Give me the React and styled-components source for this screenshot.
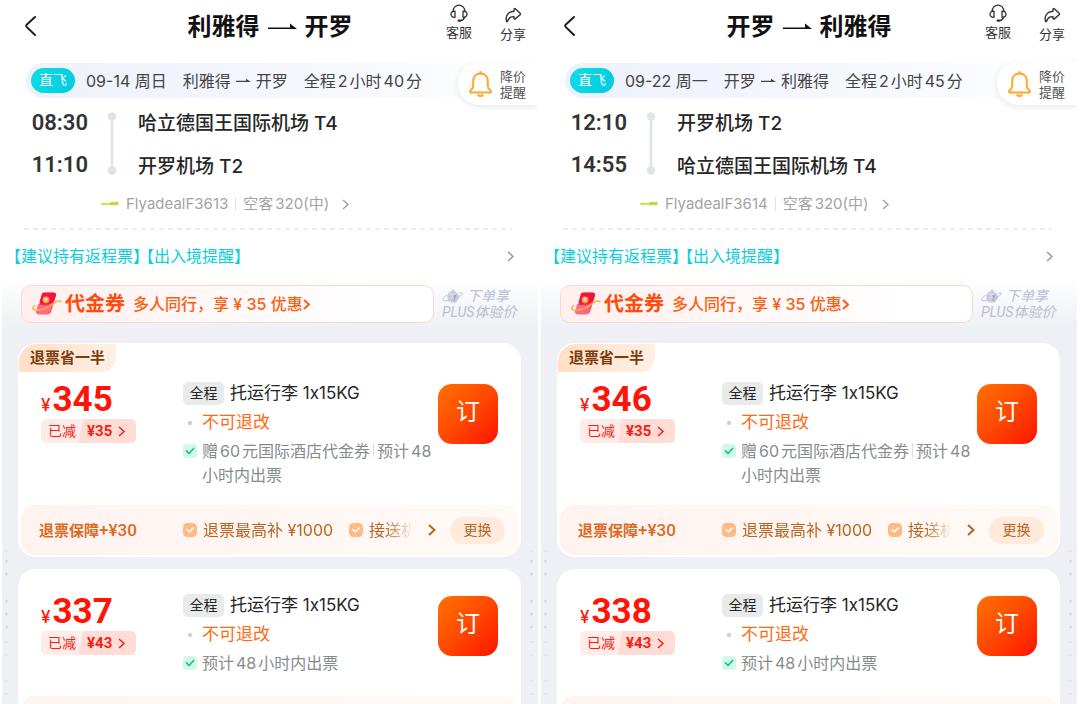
import React from "react";
import styled, { createGlobalStyle } from "styled-components";

const GlobalStyle = createGlobalStyle`
  * {
    box-sizing: border-box;
  }
  body {
    margin: 0;
    background: #ffffff;
    font-family: Inter, "Noto Sans CJK SC", sans-serif;
    color: #262626;
  }
  button {
    margin: 0;
    padding: 0;
    border: none;
    background: none;
    font-family: inherit;
    color: inherit;
    cursor: pointer;
  }
  a {
    color: inherit;
    text-decoration: none;
  }
  svg {
    display: block;
    flex: none;
  }
`;

const numberFont = `Roboto, "Noto Sans CJK SC", sans-serif`;

const Page = styled.div`
  height: 100vh;
  padding: 0 3px 0 2px;
  display: grid;
  grid-template-columns: 1fr 1fr;
  gap: 3px;
`;

const Screen = styled.main`
  position: relative;
  min-width: 0;
  height: 100vh;
  overflow-x: hidden;
  overflow-y: auto;
  scrollbar-width: none;
  background: #eff0f5;
`;

const Top = styled.section`
  background: #ffffff;
  padding-bottom: 10px;
`;

const Header = styled.header`
  height: 63px;
  display: grid;
  grid-template-columns: 1fr auto 1fr;
`;

const Back = styled.button`
  width: 48px;
  height: 52px;
  padding-left: 21px;
`;

const Title = styled.h1`
  margin: 0;
  display: flex;
  align-items: center;
  gap: 8px;
  height: 54px;
  font-size: 24px;
  line-height: 32px;
  font-weight: 700;
  color: #111111;
`;

const Actions = styled.div`
  display: flex;
  justify-content: flex-end;
  gap: 28px;
  padding: 4px 12px 0 0;
`;

const Action = styled.button`
  display: flex;
  flex-direction: column;
  align-items: center;
  gap: 2px;
  height: 40px;
  font-size: 13px;
  line-height: 16px;
  color: #333333;
`;

const TripBar = styled.div`
  position: relative;
  display: flex;
  align-items: center;
  height: 35px;
  margin-left: 24px;
  padding-left: 5px;
  border-radius: 18px 0 0 18px;
  background: linear-gradient(90deg, #edf1fb, #f6f8fd 60%, #ffffff);
  font-size: 16px;
  line-height: 24px;
  color: #444444;
  white-space: nowrap;
`;

const Direct = styled.span`
  width: 44px;
  height: 25px;
  margin-right: 11px;
  border-radius: 13px;
  background: linear-gradient(120deg, #10dce8, #00cbdc);
  font-size: 14px;
  line-height: 24px;
  text-align: center;
  color: #ffffff;
`;

const TripPart = styled.span`
  display: flex;
  align-items: center;
  gap: 5px;
  margin-right: 16px;
`;

// numbers inside chinese text get a narrow gap instead of a full space
const Num = styled.span`
  margin: 0 2px;
`;

const Reminder = styled.button`
  position: absolute;
  right: 0;
  top: -1px;
  display: flex;
  align-items: center;
  gap: 7px;
  height: 43px;
  padding: 0 12px 0 10px;
  border-radius: 22px 0 0 22px;
  background: #ffffff;
  box-shadow: 0 2px 6px rgba(60, 70, 100, 0.12);
  font-size: 13px;
  line-height: 16px;
  text-align: left;
  color: #555555;
`;

const Legs = styled.div`
  display: grid;
  grid-template-columns: 86px 48px 1fr;
  padding-top: 14px;
`;

const LegColumn = styled.div`
  display: flex;
  flex-direction: column;
  gap: 20px;
`;

const Time = styled.time`
  height: 22px;
  font-family: ${numberFont};
  font-size: 22px;
  line-height: 22px;
  font-weight: 600;
  text-align: right;
  color: #333333;
`;

const Airport = styled.span`
  height: 23px;
  padding-left: 2px;
  font-size: 19px;
  line-height: 23px;
  font-weight: 500;
  color: #262626;
  white-space: nowrap;
`;

const Rail = styled.svg`
  margin-left: 19px;
`;

const Flight = styled.a`
  display: flex;
  align-items: center;
  gap: 7px;
  margin: 15px 0 0 99px;
  font-size: 15px;
  line-height: 22px;
  color: #a3a3a3;
`;

const Aircraft = styled.span`
  margin-right: 4px;
`;

const Divider = styled.i`
  width: 1px;
  height: 14px;
  background: #e2e2e2;
`;

const Dashes = styled.div`
  height: 2px;
  margin: 13px 26px 0 22px;
  background: repeating-linear-gradient(90deg, #ebebeb 0 5px, transparent 5px 9px);
`;

const Notice = styled.a`
  display: flex;
  align-items: center;
  justify-content: space-between;
  padding: 14px 24px 0 11px;
  font-size: 16px;
  line-height: 24px;
  color: #08cfdd;
`;

const NoticeText = styled.span`
  display: flex;
  gap: 5px;
  font-feature-settings: "halt";
`;

const Promo = styled.section`
  display: flex;
  align-items: center;
  gap: 8px;
  padding: 7px 0 7px 19px;
  background: linear-gradient(180deg, #ffffff, #ecf0f4);
`;

const Coupon = styled.button`
  flex: 1;
  display: flex;
  align-items: center;
  height: 38px;
  padding: 0 9px;
  border: 1px solid #ffd6cb;
  border-radius: 10px;
  background: linear-gradient(90deg, #fff0ef, #ffffff 85%);
  font-size: 16px;
  line-height: 24px;
  font-weight: 500;
  color: #f9600f;
  white-space: nowrap;
`;

const CouponName = styled.strong`
  margin: 0 8px 0 3px;
  font-size: 20px;
  line-height: 28px;
  font-weight: 700;
  color: #ff4b0c;
`;

const Plus = styled.a`
  width: 96px;
  font-family: ${numberFont};
  font-size: 14px;
  line-height: 16px;
  font-style: italic;
  color: #b9bdd3;
  white-space: nowrap;
`;

const PlusLine = styled.span`
  display: flex;
  align-items: center;
  gap: 3px;
`;

const List = styled.section`
  display: flex;
  flex-direction: column;
  gap: 12px;
  padding: 13px 17px 20px 16px;
`;

const Card = styled.article`
  padding: 1px 2px 2px 1px;
  border-radius: 18px;
  background: #ffffff;
`;

const Tag = styled.div`
  width: 97px;
  height: 28px;
  border-radius: 18px 0 14px 0;
  background: linear-gradient(90deg, #ffdfc7, #fff0e5);
  font-size: 15px;
  line-height: 28px;
  font-weight: 700;
  text-align: center;
  color: #7d3c0d;
`;

const Fare = styled.div`
  display: grid;
  grid-template-columns: 142px 1fr 60px;
  padding: ${props => (props.$tagged ? "9px 21px 18px 22px" : "23px 21px 21px 22px")};
`;

const Price = styled.div`
  display: flex;
  align-items: baseline;
  gap: 2px;
  height: 38px;
  font-family: ${numberFont};
  font-size: 35px;
  line-height: 38px;
  font-weight: 700;
  color: #ff1408;
`;

const Yen = styled.span`
  font-family: Inter, sans-serif;
  font-size: 17px;
  line-height: 24px;
  font-weight: 500;
`;

const Saving = styled.button`
  display: flex;
  align-items: center;
  height: 24px;
  padding-right: 10px;
  border-radius: 5px;
  background: linear-gradient(100deg, #ffebe8 42%, #ffdcd6 43%);
  font-size: 14px;
  line-height: 24px;
  color: #fb1d10;
`;

const SavingLabel = styled.span`
  padding: 0 11px 0 7px;
`;

const SavingValue = styled.span`
  margin-right: 6px;
  font-family: ${numberFont};
  font-size: 15px;
  font-weight: 700;
`;

const Details = styled.div`
  display: flex;
  flex-direction: column;
  gap: 5px;
`;

const Detail = styled.div`
  display: grid;
  grid-template-columns: 14px 1fr;
  gap: 5px;
  font-size: ${props => (props.$warn ? "17px" : "16px")};
  line-height: 24px;
  color: ${props => (props.$warn ? "#ff6a10" : "#868c8e")};
  svg {
    margin-top: 5px;
  }
`;

const Baggage = styled.div`
  display: flex;
  align-items: center;
  gap: 6px;
  font-size: 17px;
  line-height: 24px;
  white-space: nowrap;
`;

const Chip = styled.span`
  width: 41px;
  height: 23px;
  border-radius: 5px;
  background: #e8ebea;
  font-size: 14px;
  line-height: 22px;
  text-align: center;
`;

const Bar = styled.i`
  display: inline-block;
  width: 1px;
  height: 14px;
  margin: 0 3px;
  background: #dddddd;
`;

const Book = styled.button`
  width: 60px;
  height: 60px;
  margin-top: 3px;
  padding-bottom: 4px;
  border-radius: 14px;
  background: linear-gradient(135deg, #ff7200, #ff4800 50%, #ff1400);
  font-size: 24px;
  line-height: 32px;
  color: #ffffff;
`;

const Cover = styled.div`
  display: grid;
  grid-template-columns: 144px 1fr 55px;
  align-items: center;
  height: 50px;
  margin-left: 2px;
  padding: 0 14px 0 18px;
  border-radius: 14px;
  background: linear-gradient(90deg, #fff3f0, #fffaf6);
  font-size: 16px;
  line-height: 24px;
  color: #b9651f;
`;

const CoverName = styled.strong`
  font-size: 15px;
  font-weight: 700;
  color: #dc6a22;
`;

const CoverPrice = styled.span`
  font-family: ${numberFont};
  font-size: 17px;
  font-weight: 500;
`;

const Benefits = styled.button`
  display: flex;
  align-items: center;
  gap: 15px;
  min-width: 0;
  padding-right: 14px;
  font-size: 16px;
  line-height: 24px;
`;

const BenefitList = styled.span`
  flex: 1;
  display: flex;
  gap: 16px;
  min-width: 0;
  overflow: hidden;
  white-space: nowrap;
  mask-image: linear-gradient(90deg, #000000 88%, transparent);
`;

const Benefit = styled.span`
  display: flex;
  align-items: center;
  gap: 6px;
`;

const Change = styled.button`
  height: 27px;
  border-radius: 14px;
  background: #ffeadb;
  font-size: 14px;
  line-height: 26px;
`;

// faint security marks that run down both edges of the screen
const Marks = styled.svg`
  position: absolute;
  top: 545px;
  ${props => (props.$right ? "right: 4px;" : "left: 2px;")}
`;

const Chevron = ({ size = 12, width = 2, color = "currentColor" }) => (
  <svg width={size / 2 + 2} height={size} viewBox={`0 0 ${size / 2 + 2} ${size}`} fill="none" stroke={color} strokeWidth={width}>
    <path d={`M1 1 L${size / 2 + 0.5} ${size / 2} L1 ${size - 1}`} />
  </svg>
);

const BackIcon = () => (
  <svg width="14" height="22" viewBox="0 0 14 22" fill="none" stroke="#1c1c1c" strokeWidth="2" strokeLinecap="round" strokeLinejoin="round">
    <path d="M12 2 L3.6 9.7 Q2.6 10.8 3.6 11.9 L12 20" />
  </svg>
);

const LongArrow = () => (
  <svg width="29" height="10" viewBox="0 0 29 10" fill="#111111">
    <path d="M0 5.400h22V1.500L29 7H0z" />
  </svg>
);

const ShortArrow = () => (
  <svg width="15" height="6" viewBox="0 0 15 6" fill="#444444">
    <path d="M0 2.800h10V0.800L15 4H0z" />
  </svg>
);

const HeadsetIcon = () => (
  <svg width="18" height="18" viewBox="0 0 18 18" fill="none" stroke="#333333" strokeWidth="1.3" strokeLinecap="round" strokeLinejoin="round">
    <path d="M3.200 7.500V7a5.800 5.800 0 0 1 11.600 0v.5" />
    <path d="M5 7.200C2.400 7 1 8.300 1 10.200s1.400 3.300 4 3.100z" />
    <path d="M13 7.200c2.600-.2 4 1.100 4 3s-1.400 3.300-4 3.100z" />
    <path d="M14.600 13.200c-.6 2-2 3.200-4.200 3.400" />
    <path d="M8.600 16.700h1.700" strokeWidth="2.200" />
  </svg>
);

const ShareIcon = () => (
  <svg width="18" height="20" viewBox="0 0 18 20" fill="none" stroke="#333333" strokeWidth="1.4" strokeLinecap="round" strokeLinejoin="round">
    <path d="M10 5.400c0-.8.7-1.100 1.300-.6l4.800 4.400c.5.500.5 1 0 1.500l-4.800 4.200c-.6.500-1.300.2-1.300-.6v-1.700c-3.300-.2-5.200 1-6.300 4.400-.3.900-1 .9-1.200 0C1.200 12.200 3.600 8 10 7.200z" />
  </svg>
);

const BellIcon = () => (
  <svg width="25" height="28" viewBox="0 0 24 28" fill="none" stroke="#ffa62b" strokeWidth="2" strokeLinecap="round" strokeLinejoin="round">
    <path d="M12 3.500c4.600 0 7.300 3.200 7.300 7.500v5.200c0 1.600 1 2.700 2.700 4.200 1 .9.500 2.100-.7 2.100H2.700c-1.200 0-1.700-1.200-.7-2.100 1.700-1.500 2.700-2.600 2.700-4.200V11c0-4.300 2.700-7.500 7.300-7.500z" />
    <path d="M12 2v1.500M9.800 25c.6 1.400 3.800 1.400 4.400 0" />
  </svg>
);

const AirlineLogo = () => (
  <svg width="18" height="8" viewBox="0 0 18 8" fill="none" stroke="#c6da3c">
    <path d="M0 4.300l3-.9 1 1 2-1 1.500 1 2-1.300" strokeWidth="1.600" />
    <path d="M8 3.200l3-1.400h6.500v3.400H9z" fill="#cbdd52" stroke="none" />
    <path d="M9.500 3.600h7" stroke="#a9c02e" strokeWidth=".8" strokeDasharray="1.500 .6" />
  </svg>
);

const CouponIcon = () => (
  <svg width="31" height="26" viewBox="0 0 31 26" fill="none">
    <path d="M13 1.500h9.500c2 0 3 1.200 2.500 3l-5 16c-.6 1.800-1.600 2.700-3.500 2.700H8c-2.200 0-3.200-1.200-2.600-3.200z" fill="#f92a4c" />
    <path d="M7 13c5 2 10.500 1.600 15.200-1.600l-3.100 9.500c-.5 1.500-1.300 2.300-2.900 2.300H8c-2.200 0-3.200-1.200-2.600-3.200z" fill="#ff6a7e" />
    <path d="M11.500 1.800h10.500c2 0 3.200 1 2.800 2.600l-1.700 5.400c-4.600 3.400-10.600 3.800-14.600 1.400l2.200-8z" fill="#f5133e" />
    <circle cx="15" cy="8.800" r="3.400" fill="#ffa552" />
    <circle cx="14.700" cy="8.300" r="1.700" fill="#ffd98a" />
    <path d="M3.500 14.500c-3.500 3.300-1.300 5.200 4 4.700 6-.6 11.500-3.900 15.500-7.200 2.800-2.200 5-2.600 7-1.400" stroke="#ffb34d" strokeWidth="1.600" strokeLinecap="round" />
  </svg>
);

const PlanetIcon = () => (
  <svg width="22" height="15" viewBox="0 0 22 15" fill="none">
    <path d="M6 4l3-1.500L11 0l2 2.500L16 4l1 5-3 4.500H8L5 9z" fill="#c9ccdc" />
    <path d="M6 4l5 2 5-2M11 6l-3 7.500" stroke="#e6e8f1" />
    <path d="M11.500 7l2-.5-1.500 5.500" stroke="#9ea3bf" strokeWidth="1.300" />
    <path d="M5 6C1 8.500-.5 11 2 11.700c4 .8 15-3 18-6.200 1.500-1.700-.5-2-3-1.300" stroke="#bfc3d6" />
  </svg>
);

const CheckIcon = () => (
  <svg width="14" height="14" viewBox="0 0 14 14" fill="none">
    <rect width="14" height="14" rx="3.500" fill="#d3f7e8" />
    <path d="M3.500 6.800l2.500 2.700 4.600-5" stroke="#16c784" strokeWidth="1.700" strokeLinecap="round" strokeLinejoin="round" />
  </svg>
);

const DotIcon = () => (
  <svg width="14" height="14" viewBox="0 0 14 14">
    <circle cx="7" cy="8" r="2.200" fill="#cfd1d1" />
  </svg>
);

const BenefitIcon = () => (
  <svg width="14" height="14" viewBox="0 0 14 14" fill="none">
    <rect width="14" height="14" rx="4.500" fill="#ffb984" />
    <path d="M4 6.500l2.400 2.400L10.200 5" stroke="#ffffff" strokeWidth="1.600" strokeLinecap="round" strokeLinejoin="round" />
  </svg>
);

const SideMarks = ({ right }) => (
  <Marks $right={right} width="5" height="152" viewBox="0 0 5 152" fill="#d9dadf" aria-hidden="true">
    {[16, 29, 56, 69, 82].map(y => (
      <circle key={y} cx="2.500" cy={y} r="1.500" />
    ))}
    {[6, 97, 110, 136, 149].map(y => (
      <rect key={y} x=".5" y={y - 0.5} width="4" height="1" />
    ))}
  </Marks>
);

const FareCard = ({ price, saving, tag, gift }) => (
  <Card>
    {tag && <Tag>{tag}</Tag>}
    <Fare $tagged={Boolean(tag)}>
      <div>
        <Price>
          <Yen>¥</Yen>
          {price}
        </Price>
        <Saving>
          <SavingLabel>已减</SavingLabel>
          <SavingValue>¥{saving}</SavingValue>
          <Chevron size={11} width={1.5} />
        </Saving>
      </div>
      <Details>
        <Baggage>
          <Chip>全程</Chip>
          托运行李 1x15KG
        </Baggage>
        <Detail $warn>
          <DotIcon />
          不可退改
        </Detail>
        <Detail>
          <CheckIcon />
          <span>
            {gift && (
              <>
                赠<Num>60</Num>元国际酒店代金券
                <Bar />
              </>
            )}
            预计<Num>48</Num>小时内出票
          </span>
        </Detail>
      </Details>
      <Book>订</Book>
    </Fare>
    <Cover>
      {tag && (
        <>
          <CoverName>
            退票保障<CoverPrice>+¥30</CoverPrice>
          </CoverName>
          <Benefits>
            <BenefitList>
              <Benefit>
                <BenefitIcon />
                退票最高补 ¥1000
              </Benefit>
              <Benefit>
                <BenefitIcon />
                接送机
              </Benefit>
            </BenefitList>
            <Chevron size={12} width={2} />
          </Benefits>
          <Change>更换</Change>
        </>
      )}
    </Cover>
  </Card>
);

const FlightScreen = ({ trip }) => (
  <Screen>
    <Top>
      <Header>
        <Back aria-label="返回">
          <BackIcon />
        </Back>
        <Title>
          {trip.from}
          <LongArrow />
          {trip.to}
        </Title>
        <Actions>
          <Action>
            <HeadsetIcon />
            客服
          </Action>
          <Action>
            <ShareIcon />
            分享
          </Action>
        </Actions>
      </Header>
      <TripBar>
        <Direct>直飞</Direct>
        <TripPart>{trip.date}</TripPart>
        <TripPart>
          {trip.from}
          <ShortArrow />
          {trip.to}
        </TripPart>
        <span>
          全程<Num>{trip.hours}</Num>小时<Num>{trip.minutes}</Num>分
        </span>
        <Reminder>
          <BellIcon />
          <span>
            降价
            <br />
            提醒
          </span>
        </Reminder>
      </TripBar>
      <Legs>
        <LegColumn>
          <Time>{trip.departs}</Time>
          <Time>{trip.arrives}</Time>
        </LegColumn>
        <Rail width="10" height="63" viewBox="0 0 10 63" fill="#dfe5e5">
          <circle cx="5" cy="4.500" r="4.300" />
          <circle cx="5" cy="58.500" r="4.300" />
          <rect x="3.700" y="4" width="2.600" height="55" />
        </Rail>
        <LegColumn>
          <Airport>{trip.fromAirport}</Airport>
          <Airport>{trip.toAirport}</Airport>
        </LegColumn>
      </Legs>
      <Flight href="#flight">
        <AirlineLogo />
        {trip.flight}
        <Divider />
        <Aircraft>
          空客<Num>320(中)</Num>
        </Aircraft>
        <Chevron size={11} width={1.5} />
      </Flight>
      <Dashes />
      <Notice href="#notice">
        <NoticeText>
          <span>【建议持有返程票】</span>
          <span>【出入境提醒】</span>
        </NoticeText>
        <Chevron size={11} width={1.5} color="#999999" />
      </Notice>
    </Top>
    <Promo>
      <Coupon>
        <CouponIcon />
        <CouponName>代金券</CouponName>
        多人同行，享 ¥ 35 优惠
        <Chevron size={11} width={2} />
      </Coupon>
      <Plus href="#plus">
        <PlusLine>
          <PlanetIcon />
          下单享
        </PlusLine>
        <PlusLine>PLUS体验价</PlusLine>
      </Plus>
    </Promo>
    <List>
      {trip.fares.map(fare => (
        <FareCard key={fare.price} {...fare} />
      ))}
    </List>
    <SideMarks />
    <SideMarks right />
  </Screen>
);

const trips = [
  {
    from: "利雅得",
    to: "开罗",
    date: "09-14 周日",
    hours: 2,
    minutes: 40,
    departs: "08:30",
    arrives: "11:10",
    fromAirport: "哈立德国王国际机场 T4",
    toAirport: "开罗机场 T2",
    flight: "FlyadealF3613",
    fares: [
      { price: 345, saving: 35, tag: "退票省一半", gift: true },
      { price: 337, saving: 43 }
    ]
  },
  {
    from: "开罗",
    to: "利雅得",
    date: "09-22 周一",
    hours: 2,
    minutes: 45,
    departs: "12:10",
    arrives: "14:55",
    fromAirport: "开罗机场 T2",
    toAirport: "哈立德国王国际机场 T4",
    flight: "FlyadealF3614",
    fares: [
      { price: 346, saving: 35, tag: "退票省一半", gift: true },
      { price: 338, saving: 43 }
    ]
  }
];

const App = () => (
  <>
    <GlobalStyle />
    <Page>
      {trips.map(trip => (
        <FlightScreen key={trip.flight} trip={trip} />
      ))}
    </Page>
  </>
);

export default App;
